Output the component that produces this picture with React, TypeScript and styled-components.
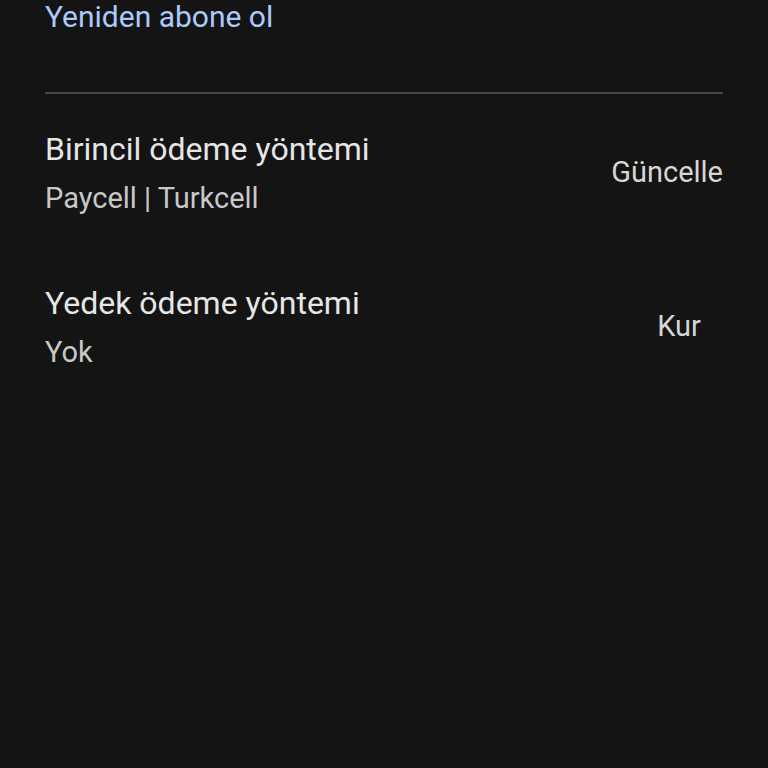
import React from 'react';
import styled, { createGlobalStyle } from 'styled-components';

const GlobalStyle = createGlobalStyle`
  html, body {
    margin: 0;
    padding: 0;
    background: #141414;
  }
  body {
    font-family: Roboto, "Noto Sans", sans-serif;
    -webkit-font-smoothing: antialiased;
  }
`;

const Page = styled.div`
  width: 768px;
  height: 768px;
  box-sizing: border-box;
  padding: 0 45px;
  background: #141414;
  overflow: hidden;
`;

const LinkText = styled.div`
  color: #abc9fa;
  font-size: 30px;
  line-height: 34px;
`;

const Divider = styled.hr`
  border: none;
  height: 2px;
  margin: 58px 0 0;
  background: #464646;
`;

const Section = styled.div`
  padding-top: 35px;
  display: flex;
  flex-direction: column;
  gap: 67px;
`;

const Row = styled.div`
  display: flex;
  align-items: center;
  justify-content: space-between;
`;

const Texts = styled.div`
  display: flex;
  flex-direction: column;
`;

const Title = styled.div`
  color: #e6e6e6;
  font-size: 32px;
  line-height: 40px;
  margin-bottom: 11px;
`;

const Sub = styled.div`
  color: #c8c8c8;
  font-size: 29px;
  line-height: 36px;
`;

const Action = styled.button`
  background: none;
  border: none;
  padding: 0;
  min-width: 88px;
  text-align: center;
  color: #d6d6d6;
  font-family: inherit;
  font-size: 29px;
  line-height: 36px;
  margin-top: -2px;
  cursor: pointer;
`;

const rows = [
  { title: 'Birincil ödeme yöntemi', sub: 'Paycell | Turkcell', action: 'Güncelle' },
  { title: 'Yedek ödeme yöntemi', sub: 'Yok', action: 'Kur' },
];

export default function App() {
  return (
    <>
      <GlobalStyle />
      <Page>
        <LinkText>Yeniden abone ol</LinkText>
        <Divider />
        <Section>
          {rows.map((r) => (
            <Row key={r.title}>
              <Texts>
                <Title>{r.title}</Title>
                <Sub>{r.sub}</Sub>
              </Texts>
              <Action>{r.action}</Action>
            </Row>
          ))}
        </Section>
      </Page>
    </>
  );
}
